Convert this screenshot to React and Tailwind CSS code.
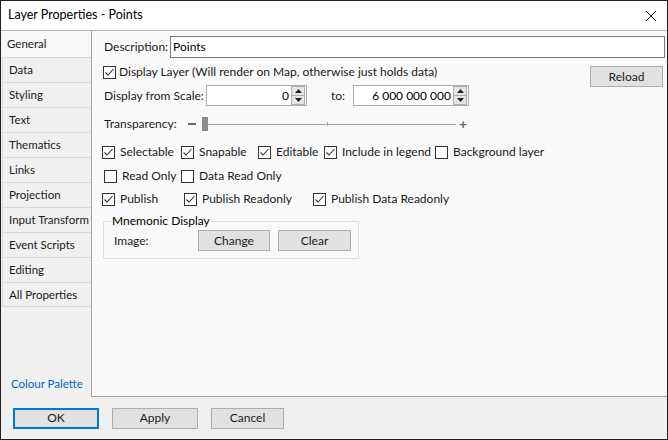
import React from 'react';

const font = { fontFamily: 'Lato, "Open Sans", sans-serif' };

function Check({ checked }) {
  return (
    <span className="inline-flex w-[13px] h-[13px] shrink-0 border border-[#333333] bg-white items-center justify-center">
      {checked && (
        <svg width="11" height="11" viewBox="0 0 11 11">
          <polyline points="1.5,5.5 4,8 9.5,2" fill="none" stroke="#333333" strokeWidth="1.1" />
        </svg>
      )}
    </span>
  );
}

function CheckItem({ label, checked, w }) {
  return (
    <div className={`flex items-center gap-[5px] ${w}`}>
      <Check checked={checked} />
      <span className="whitespace-nowrap">{label}</span>
    </div>
  );
}

function Spinner() {
  return (
    <div className="flex flex-col w-[14px] h-[19px] border border-[#adadad] bg-[#e6e6e6]">
      <div className="flex-1 flex items-center justify-center border-b border-[#adadad]">
        <svg width="7" height="4" viewBox="0 0 7 4"><polygon points="0,4 7,4 3.5,0" fill="#222" /></svg>
      </div>
      <div className="flex-1 flex items-center justify-center">
        <svg width="7" height="4" viewBox="0 0 7 4"><polygon points="0,0 7,0 3.5,4" fill="#222" /></svg>
      </div>
    </div>
  );
}

function NumBox({ value, w }) {
  return (
    <div className={`flex items-center h-[21px] border border-[#adadad] bg-white pr-[1px] ${w}`}>
      <span className="flex-1 text-right pr-[2px] text-black">{value}</span>
      <Spinner />
    </div>
  );
}

function Btn({ children, w, primary }) {
  return (
    <div
      className={`flex items-center justify-center h-[21px] shrink-0 bg-[#e1e1e1] ${w} ${
        primary ? 'border-2 border-[#0078d7]' : 'border border-[#adadad]'
      }`}
    >
      {children}
    </div>
  );
}

const tabs = ['Data', 'Styling', 'Text', 'Thematics', 'Links', 'Projection', 'Input Transform', 'Event Scripts', 'Editing', 'All Properties'];

export default function App() {
  return (
    <div className="w-[668px] h-[440px] border border-[#1f1f1f] bg-[#f0f0f0] flex flex-col text-[12px] text-[#1a1a1a]" style={font}>
      <div className="h-[30px] bg-white flex items-center justify-between pl-[7px] pr-[10px] border-b border-[#b4b4b4] shrink-0">
        <span className="text-black text-[12.5px]">Layer Properties - Points</span>
        <svg width="12" height="12" viewBox="0 0 12 12">
          <path d="M1 1 L11 11 M11 1 L1 11" stroke="#111" strokeWidth="1" />
        </svg>
      </div>

      <div className="flex flex-1 min-h-0">
        <div className="w-[90px] flex flex-col shrink-0 text-[11.5px]">
          <div className="h-[26px] flex items-center pl-[6px] bg-[#f7f7f7]">General</div>
          {tabs.map((t, i) => (
            <div
              key={t}
              className={`h-[25px] flex items-center pl-[6px] ml-[1px] whitespace-nowrap border-t border-l border-[#d9d9d9] bg-[#f0f0f0] ${
                i === tabs.length - 1 ? 'border-b' : ''
              }`}
            >
              {t}
            </div>
          ))}
          <div className="flex-1" />
          <div className="pl-[10px] pb-[5px] text-[#0066cc]">Colour Palette</div>
        </div>

        <div className="flex-1 bg-[#f9f9f9] border-l border-b border-[#a0a0a0] pl-[12px] pr-[2px] flex flex-col">
          <div className="flex items-center gap-[2px] h-[22px] mt-[5px]">
            <span className="shrink-0 whitespace-nowrap">Description:</span>
            <div className="flex-1 h-[22px] border border-[#7a7a7a] bg-white flex items-center pl-[2px] text-black">Points</div>
          </div>

          <div className="flex items-start h-[20px] mt-[4px]">
            <div className="flex items-center gap-[3px] mt-[1px] -ml-[1px]">
              <Check checked />
              <span className="whitespace-nowrap">Display Layer (Will render on Map, otherwise just holds data)</span>
            </div>
            <div className="flex-1" />
            <div className="mt-[4px] mr-[2px]">
              <Btn w="w-[73px]">Reload</Btn>
            </div>
          </div>

          <div className="flex items-center h-[21px] mt-[3px]">
            <span className="w-[102px] shrink-0">Display from Scale:</span>
            <NumBox value="0" w="w-[101px]" />
            <span className="ml-[24px] w-[22px]">to:</span>
            <NumBox value="6 000 000 000" w="w-[116px]" />
          </div>

          <div className="flex items-center h-[16px] mt-[10px]">
            <span className="w-[84px] shrink-0">Transparency:</span>
            <span className="w-[8px] h-[2px] bg-[#6d6d6d]" />
            <span className="w-[6px] h-[14px] bg-[#8c8c8c] ml-[6px]" />
            <div className="relative w-[248px] h-[1px] bg-[#a0a0a0]">
              <span className="absolute left-[119px] top-[-2px] w-[1px] h-[4px] bg-[#a0a0a0]" />
            </div>
            <span className="ml-[3px] text-[#6d6d6d] text-[14px] leading-none font-bold">+</span>
          </div>

          <div className="flex items-center h-[18px] mt-[11px] -ml-[2px]">
            <CheckItem label="Selectable" checked w="w-[79px]" />
            <CheckItem label="Snapable" checked w="w-[77px]" />
            <CheckItem label="Editable" checked w="w-[66px]" />
            <CheckItem label="Include in legend" checked w="w-[111px]" />
            <CheckItem label="Background layer" />
          </div>

          <div className="flex items-center h-[18px] mt-[6px]">
            <CheckItem label="Read Only" w="w-[77px]" />
            <CheckItem label="Data Read Only" />
          </div>

          <div className="flex items-center h-[18px] mt-[5px] -ml-[2px]">
            <CheckItem label="Publish" checked w="w-[82px]" />
            <CheckItem label="Publish Readonly" checked w="w-[129px]" />
            <CheckItem label="Publish Data Readonly" checked />
          </div>

          <fieldset className="w-[256px] h-[47px] border border-[#dcdcdc] -ml-[1px] mt-[4px] pl-[10px] pr-[6px] pb-[6px] flex items-center">
            <legend className="px-[1px] ml-[-3px] text-black">Mnemonic Display</legend>
            <span className="w-[84px] shrink-0">Image:</span>
            <Btn w="w-[72px]">Change</Btn>
            <div className="w-[8px] shrink-0" />
            <Btn w="w-[73px]">Clear</Btn>
          </fieldset>
        </div>
      </div>

      <div className="h-[42px] flex items-center pl-[12px] gap-[13px] shrink-0">
        <Btn w="w-[86px]" primary>OK</Btn>
        <Btn w="w-[86px]">Apply</Btn>
        <Btn w="w-[73px]">Cancel</Btn>
      </div>
    </div>
  );
}
